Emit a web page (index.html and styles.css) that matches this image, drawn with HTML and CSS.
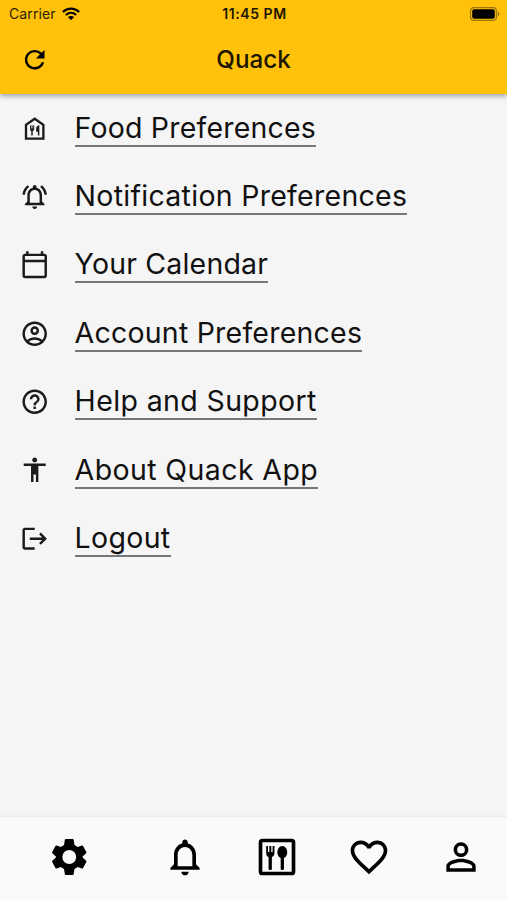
FILE: index.html
```html
<!DOCTYPE html>
<html lang="en">
<head>
<meta charset="utf-8">
<title>Quack</title>
<link rel="stylesheet" href="styles.css">
</head>
<body>
<div class="app">
  <header class="header">
    <div class="status">
      <div class="carrier"><span>Carrier</span>
        <svg class="wifi" viewBox="0 0 18 13"><g fill="none" stroke="#000" stroke-width="2.3"><path d="M.9 5C5.500.5 12.500.5 17.100 5"/><path d="M3.900 8C7 5.100 11 5.100 14.100 8"/></g><path d="M5.900 10.100C7.700 8.500 10.300 8.500 12.100 10.100L9 13.200Z"/></svg>
      </div>
      <div class="time">11:45 PM</div>
      <svg class="battery" viewBox="0 0 30 14"><rect x=".6" y=".6" width="25.800" height="12.800" rx="3.500" fill="none" stroke="#000" stroke-opacity=".4" stroke-width="1.200"/><rect x="2.200" y="2.200" width="22.600" height="9.600" rx="2"/><path d="M27.800 4.800C29.800 5.500 29.800 8.500 27.800 9.200Z" fill-opacity=".45"/></svg>
    </div>
    <div class="toolbar">
      <svg class="icon refresh" viewBox="0 0 24 24"><path d="M17.650 6.350C16.200 4.900 14.210 4 12 4c-4.420 0-7.990 3.580-7.990 8s3.570 8 7.990 8c3.730 0 6.840-2.550 7.730-6h-2.080c-.82 2.330-3.040 4-5.650 4-3.310 0-6-2.690-6-6s2.690-6 6-6c1.660 0 3.140.69 4.220 1.780L13 11h7V4l-2.350 2.350z"/></svg>
      <h1 class="title">Quack</h1>
    </div>
  </header>
  <main class="menu">
    <a class="row"><svg class="icon" viewBox="0 0 24 24"><path d="M12 3.900 20 8.900M12 3.900 19.100 8.900V20.100H4.900V8.900Z" fill="none" stroke="none"/><path d="M12 3.900 19.100 8.900V20.100H4.900V8.900Z" fill="none" stroke="currentColor" stroke-width="1.900"/><path d="M8.200 9.200h.8v2.700h.5V9.200h.8v2.700h.5V9.200h.8v3.100c0 .9-.6 1.500-1.200 1.700v3.600h-1.200v-3.600c-.6-.2-1-.8-1-1.700ZM15.800 9.200v8.400h-1.200v-3.200h-1.400v-2.700c0-1.200 1.200-2.400 2.600-2.500Z"/></svg><span class="label food">Food Preferences</span></a>
    <a class="row"><svg class="icon" viewBox="0 0 24 24"><path d="M12 22c1.100 0 2-.9 2-2h-4c0 1.100.9 2 2 2zm6-6v-5c0-3.070-1.630-5.640-4.500-6.320V4c0-.83-.67-1.500-1.500-1.500s-1.500.67-1.500 1.500v.68C7.640 5.360 6 7.920 6 11v5l-2 2v1h16v-1l-2-2zm-2 1H8v-6c0-2.480 1.510-4.500 4-4.500s4 2.020 4 4.500v6zM7.580 4.080 6.150 2.650C3.750 4.480 2.170 7.300 2.030 10.500h2c.15-2.650 1.510-4.970 3.550-6.420zm12.390 6.420h2c-.15-3.200-1.730-6.020-4.120-7.850l-1.420 1.430c2.020 1.450 3.390 3.770 3.540 6.420z"/></svg><span class="label notif">Notification Preferences</span></a>
    <a class="row"><svg class="icon" viewBox="0 0 24 24"><path d="M20 3h-1V1h-2v2H7V1H5v2H4c-1.100 0-2 .9-2 2v16c0 1.100.9 2 2 2h16c1.100 0 2-.9 2-2V5c0-1.100-.9-2-2-2zm0 2v3H4V5h16zM4 21V10h16v11H4z"/></svg><span class="label cal">Your Calendar</span></a>
    <a class="row"><svg class="icon" viewBox="0 0 24 24"><path d="M12 2C6.480 2 2 6.480 2 12s4.480 10 10 10 10-4.480 10-10S17.520 2 12 2zM7.350 18.500C8.660 17.560 10.260 17 12 17s3.340.56 4.650 1.500C15.340 19.440 13.740 20 12 20s-3.340-.56-4.650-1.500zm10.790-1.380C16.450 15.800 14.320 15 12 15s-4.450.8-6.140 2.120C4.700 15.730 4 13.950 4 12c0-4.420 3.580-8 8-8s8 3.580 8 8c0 1.950-.7 3.730-1.860 5.120zM12 6c-1.930 0-3.500 1.570-3.500 3.500S10.070 13 12 13s3.500-1.570 3.500-3.500S13.930 6 12 6zm0 5c-.83 0-1.500-.67-1.500-1.500S11.170 8 12 8s1.500.67 1.500 1.500S12.830 11 12 11z"/></svg><span class="label acct">Account Preferences</span></a>
    <a class="row"><svg class="icon" viewBox="0 0 24 24"><path d="M11 18h2v-2h-2v2zm1-16C6.480 2 2 6.480 2 12s4.480 10 10 10 10-4.480 10-10S17.520 2 12 2zm0 18c-4.410 0-8-3.590-8-8s3.590-8 8-8 8 3.590 8 8-3.590 8-8 8zm0-14c-2.210 0-4 1.790-4 4h2c0-1.100.9-2 2-2s2 .9 2 2c0 2-3 1.750-3 5h2c0-2.250 3-2.500 3-5 0-2.210-1.790-4-4-4z"/></svg><span class="label help">Help and Support</span></a>
    <a class="row"><svg class="icon" viewBox="0 0 24 24"><path d="M12 2c1.100 0 2 .9 2 2s-.9 2-2 2-2-.9-2-2 .9-2 2-2zm9 7h-6v13h-2v-6h-2v6H9V9H3V7h18v2z"/></svg><span class="label about">About Quack App</span></a>
    <a class="row"><svg class="icon" viewBox="0 0 24 24"><path d="M12 5V3H4C2.900 3 2 3.900 2 5v14c0 1.100.9 2 2 2h8v-2H4V5h8zm5 2-1.410 1.410L18.170 11H8v2h10.170l-2.580 2.590L17 17l5-5-5-5z"/></svg><span class="label logout">Logout</span></a>
  </main>
  <nav class="nav">
    <a class="tab wide"><svg viewBox="0 0 24 24" preserveAspectRatio="none"><path fill-rule="evenodd" d="M9.900 2.200h4.200q.4 0 .5.400l.5 2.900 1.900 1.100 2.500-.9q.4-.1.600.2l2 3.400q.2.400-.1.600L19.900 11.700v.6l2.100 1.800q.3.200.1.600l-2 3.400q-.2.300-.6.200l-2.500-.9-1.900 1.100-.5 2.900q-.1.400-.5.400H9.900q-.4 0-.5-.4l-.5-2.900L7 17.400l-2.500.9q-.4.100-.6-.2l-2-3.400q-.2-.4.100-.6l2.100-1.800v-.6L2 9.900q-.3-.2-.1-.6l2-3.400q.2-.3.600-.2l2.500.9 1.900-1.100.5-2.900q.1-.4.500-.4ZM12 8.200a4.100 3.800 0 1 0 0 7.600 4.100 3.800 0 0 0 0-7.600Z"/></svg></a>
    <a class="tab"><svg viewBox="0 0 24 24"><path d="M12 22c1.100 0 2-.9 2-2h-4c0 1.100.9 2 2 2zm6-6v-5c0-3.070-1.630-5.640-4.500-6.320V4c0-.83-.67-1.500-1.500-1.500s-1.500.67-1.500 1.500v.68C7.640 5.360 6 7.920 6 11v5l-2 2v1h16v-1l-2-2zm-2 1H8v-6c0-2.480 1.510-4.500 4-4.500s4 2.020 4 4.500v6z"/></svg></a>
    <a class="tab"><svg viewBox="0 0 24 24"><rect x="3" y="3" width="18" height="18" rx="1" fill="none" stroke="currentColor" stroke-width="2"/><path d="M6.100 6h1v3.300h.7V6h1.100v3.300h.7V6h1v3.800c0 1.200-.6 1.900-1.400 2.200v6.500q0 .6-.9.600t-.9-.6V12c-.8-.3-1.300-1-1.300-2.200ZM14.900 6c1.500 0 2.700 1.600 2.700 3.500 0 1.400-.8 2.600-1.800 3.100v5.900q0 .6-.9.600t-.9-.6v-5.900c-1-.5-1.800-1.700-1.800-3.100C12.200 7.600 13.400 6 14.900 6Z"/></svg></a>
    <a class="tab"><svg viewBox="0 0 24 24"><path d="M16.500 3c-1.740 0-3.410.81-4.500 2.090C10.910 3.810 9.240 3 7.500 3 4.420 3 2 5.420 2 8.500c0 3.780 3.400 6.860 8.550 11.540L12 21.350l1.450-1.320C18.600 15.360 22 12.280 22 8.500 22 5.420 19.580 3 16.500 3zm-4.400 15.550-.1.100-.1-.1C7.140 14.240 4 11.390 4 8.500 4 6.500 5.500 5 7.500 5c1.540 0 3.040.99 3.570 2.360h1.870C13.460 5.990 14.960 5 16.500 5c2 0 3.500 1.500 3.500 3.500 0 2.890-3.140 5.740-7.900 10.050z"/></svg></a>
    <a class="tab"><svg viewBox="0 0 24 24"><path d="M12 5.900a2.100 2.100 0 1 1 0 4.200 2.100 2.100 0 0 1 0-4.200m0 9c2.970 0 6.100 1.460 6.100 2.100v1.100H5.900V17c0-.64 3.130-2.100 6.100-2.100M12 4C9.790 4 8 5.790 8 8s1.790 4 4 4 4-1.790 4-4-1.790-4-4-4zm0 9c-2.670 0-8 1.340-8 4v3h16v-3c0-2.660-5.330-4-8-4z"/></svg></a>
  </nav>
</div>
</body>
</html>
```
FILE: styles.css
```css
* { box-sizing: border-box; }
body {
  margin: 0;
  font-family: Inter, "Liberation Sans", sans-serif;
  color: #111;
  background: #f5f5f5;
}
.app {
  height: 900px;
  display: flex;
  flex-direction: column;
  overflow: hidden;
}
.header {
  height: 94px;
  background: #ffc10a;
  color: #000;
  box-shadow: 0 2px 5px rgba(0, 0, 0, .35);
}
.status {
  height: 27px;
  padding: 0 7px 0 9px;
  display: grid;
  grid-template-columns: 1fr auto 1fr;
  align-items: center;
  font-size: 14px;
}
.carrier { display: flex; align-items: center; gap: 6px; color: #2b2200; letter-spacing: .12px; }
.wifi { width: 18px; height: 13px; }
.time { font-weight: 600; font-size: 14px; letter-spacing: .55px; color: #1c1500; }
.battery { width: 30px; height: 14px; justify-self: end; }
.toolbar {
  height: 65px;
  padding: 0 20px;
  display: grid;
  grid-template-columns: 30px 1fr 30px;
  align-items: center;
}
.title {
  margin: 0;
  text-align: center;
  font-size: 24.200px;
  line-height: 30px;
  font-weight: 500;
  color: #1c1500;
}
.icon { width: 29.400px; height: 29.400px; fill: currentColor; flex: none; }
.menu { flex: 1; }
.row {
  height: 68.400px;
  padding-left: 20.200px;
  display: flex;
  align-items: center;
  gap: 25px;
  color: #1a1a1a;
}
.label {
  height: 37px;
  line-height: 36px;
  border-bottom: 2px solid #777;
  font-size: 28.500px;
  color: #111;
  white-space: nowrap;
}
.food { letter-spacing: .19px; }
.notif { letter-spacing: .28px; }
.cal { letter-spacing: .18px; }
.acct { letter-spacing: .22px; }
.help { letter-spacing: .38px; }
.about { letter-spacing: .4px; }
.logout { letter-spacing: .33px; }
.nav {
  height: 83px;
  padding-bottom: 3px;
  display: flex;
  background: #fafafa;
  box-shadow: 0 -1px 2px rgba(0, 0, 0, .06);
}
.tab {
  flex: 1;
  display: flex;
  align-items: center;
  justify-content: center;
  color: #000;
}
.wide { flex: 1.510; }
.tab svg { width: 44px; height: 44px; fill: currentColor; }
.wide svg { width: 40.500px; }
```
